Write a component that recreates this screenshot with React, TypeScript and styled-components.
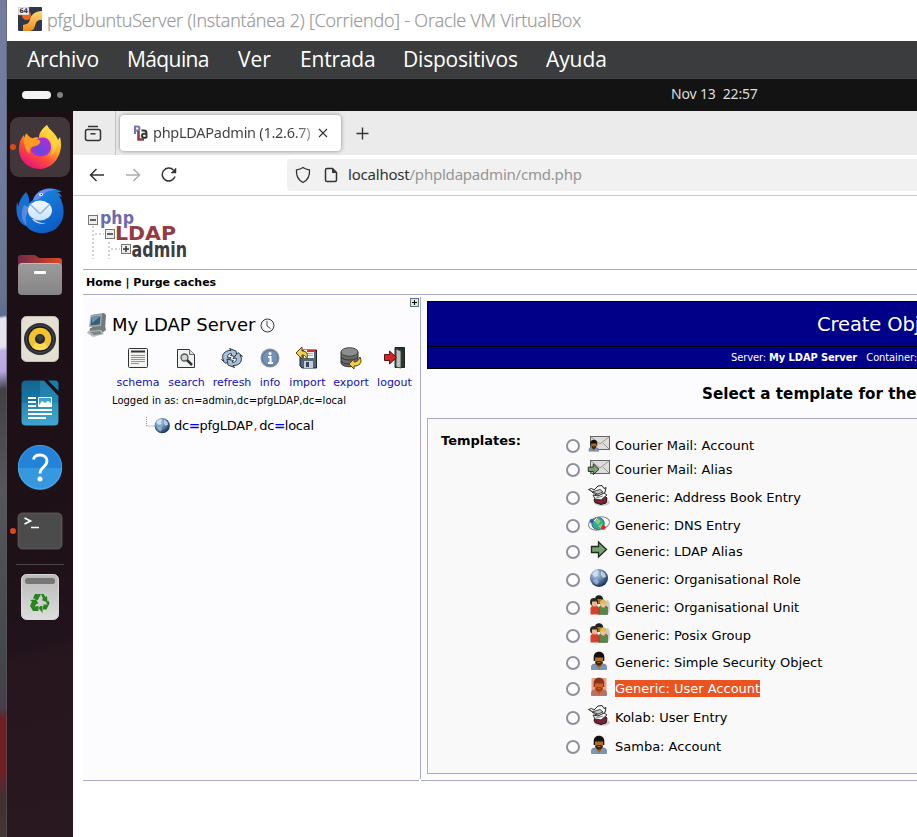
import React from "react";
import styled, { createGlobalStyle } from "styled-components";

const Global = createGlobalStyle`
  * { box-sizing: border-box; }
  html, body { margin: 0; padding: 0; overflow: hidden; background: #fff; }
  svg { display: block; flex: none; }
`;

const sans = `"DejaVu Sans", Verdana, sans-serif`;
const ui = `"Noto Sans", "Open Sans", sans-serif`;

/* ---------- frame ---------- */
const Screen = styled.div`
  display: flex;
  width: 917px;
  height: 837px;
  overflow: hidden;
`;
const Wallpaper = styled.div`
  flex: none;
  width: 7px;
  border-right: 1px solid rgba(90, 90, 100, 0.55);
  background: linear-gradient(172deg, transparent 0 702px, #6d1f24 712px 765px, transparent 790px),
    linear-gradient(170deg, #737c9f 0, #707da0 150px, #67738f 290px, #5d6c93 311px, #e6e6ee 314px, #e4e2ee 342px,
      #c0aee8 346px, #b9a5e4 366px, #3f4143 384px, #55575b 480px, #43464a 660px, #4a3b4a 705px, #40302f 790px, #473a35 837px);
`;
const Machine = styled.div`
  flex: 1;
  min-width: 0;
  display: flex;
  flex-direction: column;
`;
const TitleBar = styled.header`
  height: 41px;
  flex: none;
  display: flex;
  align-items: center;
  gap: 5px;
  padding: 0 0 4px 11px;
  background: #fff;
  color: #999;
  font: 300 18px/24px "Open Sans", sans-serif;
  letter-spacing: -0.2px;
  white-space: nowrap;
`;
const TitleText = styled.span`
  padding-top: 2px;
  -webkit-text-stroke: 0.25px #999;
`;
const MenuBar = styled.nav`
  height: 38px;
  flex: none;
  display: flex;
  align-items: center;
  padding: 0 0 1px 20px;
  background: #3b3c3d;
  border-bottom: 1px solid #424446;
  color: #fff;
  font: 21px/28px "Open Sans", sans-serif;
`;
const MenuItem = styled.span<{ $w: number; $ls: number }>`
  width: ${p => p.$w}px;
  letter-spacing: ${p => p.$ls}px;
`;
const TopBar = styled.div`
  height: 32px;
  flex: none;
  display: flex;
  align-items: center;
  padding-left: 15px;
  background: #131313;
`;
const Pill = styled.i`
  width: 29px;
  height: 8px;
  border-radius: 4px;
  background: #f2f2f2;
`;
const Dot = styled.i`
  width: 6px;
  height: 6px;
  margin-left: 6px;
  border-radius: 50%;
  background: #808080;
`;
const Clock = styled.time`
  margin: -3px 0 0 608px;
  font: 14px/20px ${ui};
  letter-spacing: -0.15px;
  white-space: pre;
  color: #dedede;
`;
const Desktop = styled.div`
  flex: 1;
  min-height: 0;
  display: flex;
`;

/* ---------- dock ---------- */
const Dock = styled.aside`
  width: 66px;
  flex: none;
  display: flex;
  flex-direction: column;
  align-items: center;
  padding-top: 4px;
  background: linear-gradient(165deg, #1b0e15 0, #1e1118 440px, #21131b 520px, #28161f 540px, #291820 100%);
`;
const DockItem = styled.div<{ $running?: boolean }>`
  position: relative;
  width: 66px;
  height: 64px;
  display: grid;
  place-items: center;
  &::before {
    content: "";
    display: ${p => (p.$running ? "block" : "none")};
    position: absolute;
    z-index: 1;
    left: 3px;
    top: 29px;
    width: 6px;
    height: 6px;
    border-radius: 50%;
    background: #dd4814;
  }
`;
const ActiveTile = styled.div`
  width: 60px;
  height: 60px;
  display: grid;
  place-items: center;
  padding-bottom: 1px;
  border-radius: 9px;
  background: #413639;
`;
const DockRule = styled.hr`
  width: 48px;
  height: 1px;
  margin: 1px 0 0;
  border: 0;
  flex: none;
  background: #4c4548;
`;

/* ---------- browser ---------- */
const Browser = styled.main`
  flex: 1;
  min-width: 0;
  display: flex;
  flex-direction: column;
  background: #fff;
`;
const TabStrip = styled.div`
  height: 44px;
  flex: none;
  display: flex;
  background: #ebebeb;
`;
const RecentTabs = styled.div`
  width: 43px;
  display: grid;
  place-items: center;
  padding: 1px 3px 0 0;
  border-right: 1px solid #c3c3c3;
`;
const Tab = styled.div`
  width: 221px;
  height: 36px;
  margin: 4px 0 0 4px;
  padding: 0 13px;
  display: flex;
  align-items: center;
  border-radius: 4px;
  background: #fff;
  box-shadow: 0 0 4px rgba(0, 0, 0, 0.42);
`;
const TabTitle = styled.span`
  width: 161px;
  margin: -2px 5px 0 4px;
  white-space: nowrap;
  font: 14.5px/22px ${ui};
  letter-spacing: -0.27px;
  background: linear-gradient(90deg, #404040 88%, #999 98%);
  background-clip: text;
  color: transparent;
`;
const NewTab = styled.div`
  padding: 16px 0 0 15px;
`;
const NavBar = styled.div`
  height: 41px;
  flex: none;
  display: flex;
  align-items: center;
  padding-left: 16px;
  border-bottom: 1px solid #c9c9c9;
`;
const NavButtons = styled.div`
  display: flex;
  gap: 20px;
  width: 198px;
`;
const UrlField = styled.div`
  flex: 1;
  height: 32px;
  display: flex;
  align-items: center;
  gap: 12px;
  padding-left: 7px;
  border-radius: 4px 0 0 4px;
  background: #f1f1f1;
`;
const Url = styled.span`
  margin: -2px 0 0 -2px;
  font: 15px/22px ${ui};
  letter-spacing: -0.21px;
  color: #969696;
  b { font-weight: 400; color: #333; }
`;

/* ---------- page ---------- */
const Page = styled.div`
  flex: 1;
  padding-left: 10px;
  font-family: ${sans};
  color: #000;
`;
const LogoArea = styled.div`
  height: 73px;
  padding: 12px 0 0 4px;
`;
const PageMenu = styled.div`
  height: 26px;
  padding: 1px 3px 0;
  border: solid #aaaacd;
  border-width: 1px 0;
  font: bold 11px/23px ${sans};
`;
const Columns = styled.div`
  display: flex;
  height: 486px;
  gap: 2px;
`;
const TreeColumn = styled.section`
  width: 336px;
  flex: none;
  display: flex;
  flex-direction: column;
  padding-top: 1px;
  border-bottom: 1px solid #aaaacd;
  background: linear-gradient(#fcfcfe, #fcfcfe) no-repeat 0 2px / 100% 482px;
`;
const Expand = styled.div`
  width: 9px;
  height: 9px;
  margin: 2px 0 0 auto;
`;
const ServerTitle = styled.h1`
  display: flex;
  align-items: center;
  height: 24px;
  margin: 6px 0 0;
  padding-left: 4px;
  font: 18px/24px ${sans};
  white-space: nowrap;
`;
const ServerName = styled.span`
  width: 148px;
  margin-left: 4px;
`;
const Tools = styled.div`
  display: flex;
  margin-top: 9px;
  padding-left: 30px;
`;
const Tool = styled.div<{ $w: number }>`
  width: ${p => p.$w}px;
  display: flex;
  flex-direction: column;
  align-items: center;
  font: 11px/14px ${sans};
  color: #1111b4;
  svg { margin: 0 1px 6px 0; }
`;
const LoggedIn = styled.p`
  margin: 4px 0 0 29px;
  font: 10px/13px ${sans};
`;
const TreeRoot = styled.div`
  display: flex;
  height: 18px;
  margin: 10px 0 0 61px;
  font: 13px/18px ${sans};
  letter-spacing: -0.27px;
  white-space: nowrap;
  svg { margin-right: 4px; }
  b { font-weight: 400; color: #00f; -webkit-text-stroke: 0.4px #00f; }
  em { font-style: normal; color: #f00; margin: 0 2px 0 1px; }
`;
const Divider = styled.div`
  width: 1px;
  height: 482px;
  margin: 2px 1px 0 -1px;
  flex: none;
  background: #aaaacd;
`;
const MainColumn = styled.section`
  flex: 1;
  min-width: 0;
  display: flex;
  flex-direction: column;
  margin-left: -3px;
  padding: 6px 0 0 6px;
  border-bottom: 1px solid #aaaacd;
  background: linear-gradient(#fcfcfe, #fcfcfe) no-repeat 0 2px / 100% 482px;
`;
const Banner = styled.div`
  height: 46px;
  padding-left: 389px;
  border: solid #000;
  border-width: 1px 0 1px 1px;
  background: #000088;
  color: #fff;
  font: 19.5px/46px ${sans};
  letter-spacing: -0.1px;
  white-space: nowrap;
  overflow: hidden;
`;
const SubBanner = styled.div`
  height: 22px;
  padding-left: 303px;
  border: solid #000;
  border-width: 0 0 1px 1px;
  background: #000088;
  color: #fff;
  font: 11px/21px "DejaVu Sans Condensed", ${sans};
  letter-spacing: -0.08px;
  white-space: pre;
  overflow: hidden;
  b { letter-spacing: -0.1px; }
`;
const Heading = styled.h2`
  height: 20px;
  margin: 15px 0 14px;
  padding-left: 275px;
  overflow: hidden;
  white-space: nowrap;
  font: bold 15.2px/20px ${sans};
`;
const Form = styled.div`
  height: 356px;
  display: flex;
  padding-left: 13px;
  border: solid #aaaacd;
  border-width: 1px 0 1px 1px;
  background: #f9f9f9;
`;
const FormLabel = styled.div`
  width: 125px;
  padding-top: 13px;
  font: bold 13px/18px ${sans};
`;
const Options = styled.div`
  padding-top: 16px;
`;
const Option = styled.label<{ $gap: number }>`
  display: flex;
  align-items: center;
  height: 20px;
  margin-top: ${p => p.$gap}px;
  font: 13px/20px ${sans};
  white-space: nowrap;
`;
const Radio = styled.i`
  width: 14px;
  height: 14px;
  margin-top: 2px;
  border: 2px solid #8f8f9d;
  border-radius: 50%;
  background: #fff;
`;
const IconSlot = styled.span`
  width: 24px;
  height: 24px;
  margin: -3px 4px 0 7px;
  display: grid;
  place-items: center;
`;
const OptionText = styled.span<{ $selected?: boolean }>`
  line-height: 17px;
  background: ${p => (p.$selected ? "#e95420" : "transparent")};
  color: ${p => (p.$selected ? "#fff" : "#000")};
`;

/* ---------- window icons ---------- */
const BoxLogo = () => (
  <svg width="24" height="24" viewBox="0 0 24 24">
    <defs><linearGradient id="vb" x2="0" y2="1"><stop stopColor="#ffd873" /><stop offset="1" stopColor="#f28a1c" /></linearGradient></defs>
    <rect width="24" height="24" rx="1" fill="#303746" />
    <path d="M24 4v9c-5-.5-6 2-7 6s-3 5-7 5H5v-6c5-1 6-2 7-6s5-8 12-8z" fill="url(#vb)" />
    <circle cx="8.5" cy="8.500" r="4.500" fill="#f0651b" />
    <rect width="11" height="8" fill="#f5f5f5" stroke="#888" strokeWidth=".5" />
    <text x="1.200" y="6.400" fontSize="6.500" fontWeight="700" fontFamily="DejaVu Sans" fill="#333">64</text>
  </svg>
);
const Firefox = () => (
  <svg width="44" height="46" viewBox="0 0 44 46">
    <defs>
      <linearGradient id="ff" x1=".85" y1=".1" x2=".3" y2="1"><stop stopColor="#fff04d" /><stop offset=".35" stopColor="#ffb22e" /><stop offset=".65" stopColor="#ff4f36" /><stop offset="1" stopColor="#e8127f" /></linearGradient>
      <radialGradient id="fp" cx=".5" cy=".65"><stop stopColor="#5d4bd8" /><stop offset="1" stopColor="#a52fdb" /></radialGradient>
    </defs>
    <path d="M29 1c2 5 9 8 11 15l2-3c4 14-4 31-20 32C8 45 0 34 1 23c.400-5 2-9 5-12l1 5 2-6 4 5c4-2 7-2 8-1 0-6 4-10 8-13z" fill="url(#ff)" />
    <path d="M22 14c7-2 11 3 11 9 0 12-18 12-20 3-1-6 3-11 9-12z" fill="url(#fp)" />
    <path d="M6 15l2-6c3 5 6 5 10 6 4 1 5 2 4 4-2 3-5 3-8 4-2 2-3 3-2 7-4-3-7-9-6-15z" fill="#ff9a25" />
    <path d="M29 1c-4 5-3 9 1 13 6 5 6 13 2 18 8-4 9-18 3-23-3-3-5-5-6-8z" fill="#ffd53b" opacity=".8" />
  </svg>
);
const Thunderbird = () => (
  <svg width="48" height="48" viewBox="0 0 48 48">
    <defs>
      <linearGradient id="tb" x2=".5" y2="1"><stop stopColor="#1f8be6" /><stop offset="1" stopColor="#0b5fc4" /></linearGradient>
      <linearGradient id="te" x2="0" y2="1"><stop stopColor="#f4faff" /><stop offset="1" stopColor="#c8e2fb" /></linearGradient>
    </defs>
    <path d="M10 5c3 4 4 8 3 14l-3 20C2 36-1 26 1 15c1 2 1 3 1 5 1-6 4-11 8-15z" fill="#1670cf" />
    <path d="M17 13C20 3 33-3 46 5h-5c3 1 4 3 5 5l-3-1c8 13 5 28-5 34-9 5-21 4-27-3-7-9-3-21 6-27z" fill="url(#tb)" />
    <path d="M17 13c3-9 13-13 24-10-8 0-12 2-15 6-3 4-6 5-9 4z" fill="#8a8cf0" opacity=".75" />
    <path d="M8 18c-4 9-2 17 3 21-2-6-2-12 3-18z" fill="#8d95ee" opacity=".6" />
    <ellipse cx="24" cy="23.500" rx="12" ry="10" fill="url(#te)" />
    <path d="M14 17l9 9q1 .8 2 0l9-9" fill="none" stroke="#8fb4da" strokeWidth="1.500" />
    <path d="M18 32c2 2 6 4 12 5-7 0-11-1-14-5z" fill="#d8d4fb" />
    <ellipse cx="25" cy="7.500" rx="2" ry="1.600" fill="#fff" /><circle cx="25.300" cy="7.500" r=".8" fill="#235" />
  </svg>
);
const Files = () => (
  <svg width="46" height="42" viewBox="0 0 46 42">
    <defs>
      <linearGradient id="fo"><stop stopColor="#702847" /><stop offset="1" stopColor="#df4a20" /></linearGradient>
      <linearGradient id="fg" x2="0" y2="1"><stop stopColor="#9b9b9b" /><stop offset="1" stopColor="#858585" /></linearGradient>
    </defs>
    <path d="M1 4q0-3 3-3h13q2 0 3 1.500L22 4h20q3 0 3 3v18H1z" fill="url(#fo)" />
    <rect x="1" y="9" width="44" height="32" rx="4" fill="url(#fg)" />
    <path d="M3 10.500Q4 9.500 6 9.500h34q2 0 3 1" stroke="#bdbdbd" fill="none" />
    <rect x="17" y="17" width="12" height="3" rx="1" fill="#fff" />
  </svg>
);
const Rhythmbox = () => (
  <svg width="38" height="46" viewBox="0 0 38 46">
    <rect x=".500" y=".500" width="37" height="45" rx="5" fill="#e4e0d4" stroke="#c4bfb2" />
    <circle cx="19" cy="23" r="16" fill="#2d3034" /><circle cx="19" cy="23" r="13.500" fill="#15181c" stroke="#4a4d51" />
    <circle cx="19" cy="23" r="11.300" fill="#f3c12c" /><path d="M11 31a11.300 11.300 0 0 0 16 0l-8-8z" fill="#ffd857" />
    <circle cx="19" cy="23" r="5" fill="#25282d" /><circle cx="19" cy="22" r="3" fill="#3b3d40" />
  </svg>
);
const Writer = () => (
  <svg width="38" height="46" viewBox="0 0 38 46">
    <defs><linearGradient id="wr" x2="0" y2="1"><stop stopColor="#12658f" /><stop offset=".5" stopColor="#1979a8" /><stop offset=".51" stopColor="#2587b4" /><stop offset="1" stopColor="#3fa4cd" /></linearGradient></defs>
    <path d="M5 .500h18L37.500 16v25q0 4.500-4.500 4.500H5Q.500 45.500.500 41V5Q.500.500 5 .500z" fill="url(#wr)" />
    <path d="M19 1h4l14 15v29H19z" fill="#48b3dc" opacity=".28" />
    <path d="M27 .500h7q3.500 0 3.500 3.500v7z" fill="#197ba8" />
    <g fill="#fff"><path d="M7 17h8v2H7zM7 21h8v2H7zM7 25h8v2H7zM7 29h24v2H7zM7 33h24v2H7zM7 37h18v2H7z" /><rect x="17" y="17" width="14" height="10" rx="1" /></g>
    <path d="M18 18h12v5l-3-2-3 2-3-2-3 4z" fill="#3da4d0" />
  </svg>
);
const Help = () => (
  <svg width="46" height="46" viewBox="0 0 46 46">
    <circle cx="23" cy="23" r="22" fill="#2283d9" /><path d="M1 24a22 22 0 0 0 44 0z" fill="#3698df" />
    <circle cx="23" cy="23" r="21.700" fill="none" stroke="#68b0e5" strokeWidth=".6" />
    <path d="M16.500 15.500C17 12.500 19.500 11 23 11c4 0 7 2 7 6 0 6-7 6-7 12.500" fill="none" stroke="#fff" strokeWidth="2.800" /><circle cx="23" cy="35" r="2.500" fill="#fff" />
  </svg>
);
const Terminal = () => (
  <svg width="46" height="38" viewBox="0 0 46 38">
    <rect x="1" y="1" width="44" height="36" rx="4.500" fill="#4b4b4b" stroke="#676767" strokeWidth=".7" />
    <path d="M7.500 6l6 3-6 3" fill="none" stroke="#fff" strokeWidth="1.700" /><path d="M14 15.500h8" stroke="#fff" strokeWidth="1.500" />
  </svg>
);
const Trash = () => (
  <svg width="38" height="46" viewBox="0 0 38 46">
    <defs><linearGradient id="tr" x2="0" y2="1"><stop stopColor="#bababa" /><stop offset="1" stopColor="#dddddd" /></linearGradient></defs>
    <rect x=".500" y=".500" width="37" height="45" rx="5" fill="url(#tr)" stroke="#d8d8d8" />
    <rect x="4" y="4" width="30" height="6" rx="2.500" fill="#777" />
    <g fill="#28851c">
      <path d="M14 20h6l-3.500 6.500-4.500-2.500z" /><path d="M20 20h2.500l2 3 1.500-1 .5 6.500-6-2.500 1.500-1z" />
      <path d="M25.500 29l2.500-2 1 3-3 6h-3.500v-5H27z" transform="translate(-.5 -.5)" /><path d="M21.500 29.500v9.500l-4-5z" />
      <path d="M9 26l6-.5 3 5-2-1-2.500 3 4-.5V37H12l-3-5 2-4.500z" />
    </g>
    <path d="M19 26l4 6h-7z" fill="#cfcfcf" />
  </svg>
);

/* ---------- browser icons ---------- */
const Line = styled.svg`
  fill: none;
  stroke: #333;
  stroke-width: 1.5;
`;
const Recent = () => <Line width="18" height="18" viewBox="0 0 18 18"><path d="M4 1.500h10" /><rect x="1.500" y="4.500" width="15" height="11" rx="2" /><path d="M6.500 8.800h5" /></Line>;
const Favicon = () => (
  <svg width="16" height="16" viewBox="0 0 16 16">
    <path d="M2 9V1.500h2.500q2 0 2 2t-2 2H2" stroke="#7779ad" strokeWidth="2" fill="none" />
    <path d="M5.500 6v8.500H11" stroke="#923b42" strokeWidth="2.600" fill="none" />
    <path d="M8.500 5.500h2.500q2.500 0 2.500 2.500v5M13.500 8.800h-2.500q-2 0-2 2t2 2h2.500" stroke="#333" strokeWidth="1.900" fill="none" />
  </svg>
);
const Cross = () => <Line width="10" height="10" viewBox="0 0 10 10"><path d="M1 1l8 8M9 1L1 9" strokeWidth="1.100" /></Line>;
const Plus = () => <Line width="13" height="13" viewBox="0 0 13 13"><path d="M6.500.500v12M.500 6.500h12" strokeWidth="1.400" /></Line>;
const Back = () => <Line width="16" height="16" viewBox="0 0 16 16"><path d="M15 8H2M7.500 2L1.500 8l6 6" /></Line>;
const Forward = () => <Line width="16" height="16" viewBox="0 0 16 16"><path d="M1 8h13M8.500 2l6 6-6 6" stroke="#adadad" /></Line>;
const Reload = () => <Line width="16" height="16" viewBox="0 0 16 16"><path d="M12.500 3A6.500 6.500 0 1 0 14 9.500" /><path d="M10 6h5V1z" fill="#333" strokeWidth=".5" /></Line>;
const Shield = () => <Line width="18" height="18" viewBox="0 0 18 18"><path d="M9 1.500c2 1.500 4 2 6.500 2.300.5 6.200-1.500 10.200-6.500 12.700-5-2.500-7-6.500-6.500-12.700C5 3.500 7 3 9 1.500z" strokeWidth="1.300" /></Line>;
const Doc = () => <Line width="14" height="16" viewBox="0 0 14 16"><path d="M3 1.500h5.500L12.500 5.500v7.500q0 1.500-1.500 1.500H3q-1.500 0-1.500-1.500V3Q1.500 1.500 3 1.500z" /><path d="M8.500 2v3.500H12z" fill="#333" strokeWidth="1" /></Line>;

/* ---------- page icons ---------- */
const PlaLogo = () => (
  <svg width="102" height="52" viewBox="0 0 102 52">
    <g stroke="#c6c6c6" strokeWidth="1.600" strokeDasharray="2 2"><path d="M6 18v33M22 34v17M8 26h9M24 41h9" fill="none" /></g>
    <g fill="#ededed" stroke="#777"><rect x="1.500" y="7.500" width="9" height="9" /><rect x="18.500" y="21.500" width="9" height="9" /><rect x="34.500" y="36.500" width="9" height="9" /></g>
    <path d="M3 12h6M20 26h6M36 41h6M39 38v6" stroke="#333" strokeWidth="1.500" />
    <text x="13" y="16" fontSize="17" fontFamily="DejaVu Sans Condensed, DejaVu Sans" fontWeight="700" textLength="34" lengthAdjust="spacingAndGlyphs" fill="#6b6cae">php</text>
    <text x="28" y="32" fontSize="20" fontFamily="DejaVu Sans" fontWeight="700" textLength="61" lengthAdjust="spacingAndGlyphs" fill="#943c43">LDAP</text>
    <text x="44.500" y="49" fontSize="20.500" fontFamily="DejaVu Sans Condensed, DejaVu Sans" fontWeight="700" textLength="55.500" lengthAdjust="spacingAndGlyphs" fill="#3d3d40">admin</text>
  </svg>
);
const ExpandIcon = () => <svg width="9" height="9" viewBox="0 0 9 9"><rect x=".500" y=".500" width="8" height="8" fill="#dde6e8" stroke="#5d7377" /><path d="M2 4.500h5M4.500 2v5" stroke="#000" /></svg>;
const Computer = () => (
  <svg width="21" height="24" viewBox="0 0 21 24">
    <path d="M4 2l13-2 2 2-1 14H5z" fill="#73797a" /><path d="M3.500 2.500L15 1l-1 12-12 1z" fill="#a4adac" /><path d="M4.500 4l9-1-.7 8.500-9.300 1z" fill="#395d7d" /><path d="M4.500 4l9-1-8.500 7z" fill="#6c92b1" />
    <path d="M3 15l15-2 1 4-4 3H2z" fill="#757d7d" /><path d="M1 18l13-1 3 4-11 3-6-4z" fill="#b6bbbb" /><path d="M3 19l10-1 2 3-8 1z" fill="#7e8787" />
  </svg>
);
const ClockIcon = () => <svg width="15" height="15" viewBox="0 0 15 15"><circle cx="7.500" cy="7.500" r="6.500" fill="#fdfdfd" stroke="#333" /><path d="M7 3v5l3.500 2.500" fill="none" stroke="#444" /><circle cx="7.500" cy="7.500" r="5" fill="none" stroke="#ddd" strokeWidth=".6" /></svg>;
const Ico = ({ children }: { children: React.ReactNode }) => <svg width="24" height="24" viewBox="0 0 24 24">{children}</svg>;
const SchemaIcon = () => <Ico><rect x="2.500" y="2.500" width="19" height="19" rx="1" fill="#f3f3f1" stroke="#333" /><path d="M5 5.500h14" stroke="#333" strokeWidth="2" /><path d="M5 9.500h14M5 11.500h14M5 13.500h14M5 15.500h14M5 17.500h8" stroke="#8a93a6" /></Ico>;
const SearchIcon = () => <Ico><path d="M3.500 3.500h12l5 5v13h-17z" fill="#f2f2f0" stroke="#333" /><path d="M15.500 3.500v5h5" fill="#ddd" stroke="#666" /><circle cx="10.500" cy="11.500" r="3.500" fill="#cbd5d8" stroke="#555" strokeWidth="1.300" /><path d="M13 14l5 5" stroke="#333" strokeWidth="2.500" /></Ico>;
const RefreshIcon = () => (
  <Ico><g fill="#a9bdd5" stroke="#28384c" strokeLinejoin="round"><path d="M4 15C0 9 5 4 11 4.500L9.500 2.500 16 5l1 6-6.500-1.500 1.500-1.500c-3-1-5 1-4 4l3-.5-5 6-4.500-4z" /><path d="M20 9c4 6-1 11-7 10.500l1.500 2L8 19l-1-6 6.500 1.500L12 16c3 1 5-1 4-4l-3 .5 5-6 4.500 4z" /></g></Ico>
);
const InfoIcon = () => <Ico><circle cx="12" cy="12" r="8.700" fill="#7092bd" stroke="#8a9196" strokeWidth="1.600" /><circle cx="12" cy="12" r="7.700" fill="none" stroke="#4e719b" strokeWidth=".8" /><circle cx="12" cy="7.500" r="1.500" fill="#fff" /><path d="M10 11h2.500v6M10 17h5" stroke="#fff" strokeWidth="2" fill="none" /></Ico>;
const ImportIcon = () => (
  <Ico><path d="M5 4h16.500v18H7l-2-2z" fill="#536779" stroke="#182532" /><path d="M9 4h10v8H9z" fill="#f5f5f5" /><path d="M12 4h8v2h-8z" fill="#ca3333" /><path d="M11 7.500h7M11 9.500h7" stroke="#aaa" /><path d="M9 15h9v7H9z" fill="#c8ced1" /><path d="M11 16h3v5h-3z" fill="#34485a" /><path d="M1 7l6-6v4c5 0 6 3 5 8-2-4-3-4-5-4v4z" fill="#f3ce55" stroke="#5d4208" /></Ico>
);
const ExportIcon = () => (
  <Ico><path d="M2 6v11c1 5 16 5 17 0V6z" fill="#666a6a" stroke="#333" /><path d="M2 11c2 4 15 4 17 0M2 15c2 4 15 4 17 0" fill="none" stroke="#333" /><ellipse cx="10.500" cy="6" rx="8.500" ry="4.300" fill="#8b8e8b" stroke="#444" /><path d="M21 11c3 6-1 9-6 9v3l-5-5 5-5v3c3 0 5-2 6-5z" fill="#f3ce55" stroke="#5d4208" /></Ico>
);
const LogoutIcon = () => (
  <Ico><path d="M13 1.500h9.500v20H13z" fill="#22362e" stroke="#222" /><path d="M14 3l5 2v17l-5-1z" fill="#bac0ba" stroke="#444" /><path d="M2.500 8.500h5V5l7 6.500-7 6.500v-3.500h-5z" fill="#cf2525" stroke="#571111" /></Ico>
);
const GlobeArt = () => (
  <>
    <defs><radialGradient id="gl" cx=".35" cy=".3" r=".75"><stop stopColor="#bed3e8" /><stop offset=".5" stopColor="#6286b2" /><stop offset="1" stopColor="#12284c" /></radialGradient></defs>
    <circle cx="12" cy="12" r="9" fill="url(#gl)" />
    <path d="M5 8c1-2 3-4 6-4l1 2-2 2 1 2-4 1zM14 5c3 1 5 3 5 6l-3 1-2-3z" fill="#e4ebef" opacity=".7" /><path d="M6 14l4-1 2 3-2 3c-2-1-4-3-4-5z" fill="#b9cbd9" opacity=".6" />
  </>
);
const TreeIcon = () => (
  <svg width="26" height="18" viewBox="0 0 26 18">
    <path d="M2.500 0v9h8" fill="none" stroke="#909090" strokeDasharray="1 1" /><g transform="translate(8 -1.500) scale(.85)"><GlobeArt /></g>
  </svg>
);
const Envelope = () => <><rect x="3.500" y="4.500" width="19" height="13" fill="#dcdcda" stroke="#666" /><path d="M4 5l9 7L22 5M4 17l6-6M22 17l-6-6" fill="none" stroke="#999" /></>;
const PersonArt = () => (
  <>
    <path d="M4.500 20.500v-3c0-2 2-2.500 4-2.500h7c2 0 4 .5 4 2.500v3z" fill="#7897bd" stroke="#53708f" strokeWidth=".6" /><path d="M9.500 15h5v2L12 20l-2.500-3z" fill="#a86822" />
    <path d="M6.700 8c0-7 10.600-7 10.600 0v4H6.700z" fill="#16100c" /><path d="M8 8.500h8V13c0 5-8 5-8 0z" fill="#b26f24" /><path d="M8.200 13c1-1.500 6.600-1.500 7.600 0-1 5-6.600 5-7.600 0z" fill="#39220e" /><path d="M10.500 13.500h3" stroke="#b26f24" />
  </>
);
const MailUser = () => <Ico><Envelope /><g transform="translate(-1 6) scale(.65)"><PersonArt /></g></Ico>;
const ArrowArt = () => <path d="M4.500 8.500h7V4l8 7.500-8 7.500v-4.500h-7z" fill="#79a072" stroke="#1c2c18" strokeWidth="1.300" />;
const MailAlias = () => <Ico><Envelope /><g transform="translate(-2 5) scale(.72)"><ArrowArt /></g></Ico>;
const AddressBook = () => (
  <Ico>
    <ellipse cx="15" cy="18.500" rx="8" ry="3.500" fill="#cfcfcf" />
    <path d="M7 16l2-3 9-1 2 2-1 5-5 1.500-6-2z" fill="#7d2035" stroke="#251016" /><path d="M8 14l9-3 2 1-9 4z" fill="#414346" />
    <path d="M1.500 5.500l3-1L7 6l4-4 4-.500 2 3 2-1-1 5-5 3-5-1-3-3z" fill="#f7f7f5" stroke="#222" /><path d="M5 8l8-2.500L16 8l-5 2z" fill="#c9c9c7" stroke="#222" strokeWidth=".8" /><path d="M6 11l5 1 6-3 3 2-6 5-6-1z" fill="#f3f3f3" stroke="#333" /><path d="M9 14l7-2" stroke="#888" />
  </Ico>
);
const Dns = () => (
  <Ico><circle cx="11" cy="11.500" r="6.200" fill="#35a592" stroke="#286575" /><path d="M7 9l3-3 4 3-3 4zM11 14l5-3-2 6z" fill="#7fd07a" /><path d="M7 9l3-3" stroke="#dff" /><ellipse cx="12" cy="11.500" rx="10.700" ry="6.500" fill="none" stroke="#888" transform="rotate(-12 12 11.500)" /><circle cx="4.500" cy="9" r="2" fill="#2859ba" /><circle cx="16.500" cy="15.500" r="2.200" fill="#cf2e2e" /></Ico>
);
const Alias = () => <Ico><ArrowArt /></Ico>;
const Globe = () => <Ico><GlobeArt /></Ico>;
const Group = () => (
  <Ico>
    <ellipse cx="20.500" cy="13" rx="2.500" ry="7" fill="#ccc" /><circle cx="12" cy="5.500" r="4.300" fill="#24201c" /><path d="M9.500 5h5v4h-5z" fill="#a66a3b" />
    <path d="M3.500 20.500v-6c0-4 8-4 9 0v6z" fill="#da3e2d" /><path d="M12 20.500v-7c1-3 7-3 8.500 0v7z" fill="#568745" stroke="#344f2d" strokeWidth=".5" />
    <circle cx="7" cy="8" r="4" fill="#302a24" /><path d="M5 7.500h5V11c-1 2-4 2-5 0z" fill="#e7b791" /><path d="M13 9c0-5 6.500-5 6.500 0v2.500H13z" fill="#dfbc4f" /><path d="M14 9.500h4.500V12c-1 2-3.500 2-4.500 0z" fill="#edc19b" />
  </Ico>
);
const Person = () => <Ico><PersonArt /></Ico>;
const PersonSelected = () => <Ico><PersonArt /><path d="M4.500 3h15v17.500h-15z" fill="#e95420" opacity=".55" /></Ico>;

const tools: [string, number, React.FC][] = [
  ["schema", 50, SchemaIcon], ["search", 47, SearchIcon], ["refresh", 44, RefreshIcon], ["info", 32, InfoIcon],
  ["import", 43, ImportIcon], ["export", 44, ExportIcon], ["logout", 43, LogoutIcon],
];
const templates: [string, number, React.FC][] = [
  ["Courier Mail: Account", 0, MailUser],
  ["Courier Mail: Alias", 4, MailAlias],
  ["Generic: Address Book Entry", 8, AddressBook],
  ["Generic: DNS Entry", 8, Dns],
  ["Generic: LDAP Alias", 6, Alias],
  ["Generic: Organisational Role", 8, Globe],
  ["Generic: Organisational Unit", 8, Group],
  ["Generic: Posix Group", 8, Group],
  ["Generic: Simple Security Object", 7, Person],
  ["Generic: User Account", 6, PersonSelected],
  ["Kolab: User Entry", 9, AddressBook],
  ["Samba: Account", 9, Person],
];

export default function App() {
  return (
    <Screen>
      <Global />
      <Wallpaper />
      <Machine>
        <TitleBar><BoxLogo /><TitleText>pfgUbuntuServer (Instantánea 2) [Corriendo] - Oracle VM VirtualBox</TitleText></TitleBar>
        <MenuBar>
          <MenuItem $w={100} $ls={-0.2}>Archivo</MenuItem><MenuItem $w={111} $ls={-0.6}>Máquina</MenuItem>
          <MenuItem $w={62} $ls={0}>Ver</MenuItem><MenuItem $w={103} $ls={-0.2}>Entrada</MenuItem>
          <MenuItem $w={143} $ls={-0.2}>Dispositivos</MenuItem><MenuItem $w={80} $ls={-0.1}>Ayuda</MenuItem>
        </MenuBar>
        <TopBar><Pill /><Dot /><Clock>Nov 13  22:57</Clock></TopBar>
        <Desktop>
          <Dock>
            <DockItem $running><ActiveTile><Firefox /></ActiveTile></DockItem>
            <DockItem><Thunderbird /></DockItem>
            <DockItem><Files /></DockItem>
            <DockItem><Rhythmbox /></DockItem>
            <DockItem><Writer /></DockItem>
            <DockItem><Help /></DockItem>
            <DockItem $running><Terminal /></DockItem>
            <DockRule />
            <DockItem><Trash /></DockItem>
          </Dock>
          <Browser>
            <TabStrip>
              <RecentTabs><Recent /></RecentTabs>
              <Tab><Favicon /><TabTitle>phpLDAPadmin (1.2.6.7)</TabTitle><Cross /></Tab>
              <NewTab><Plus /></NewTab>
            </TabStrip>
            <NavBar>
              <NavButtons><Back /><Forward /><Reload /></NavButtons>
              <UrlField><Shield /><Doc /><Url><b>localhost</b>/phpldapadmin/cmd.php</Url></UrlField>
            </NavBar>
            <Page>
              <LogoArea><PlaLogo /></LogoArea>
              <PageMenu>Home | Purge caches</PageMenu>
              <Columns>
                <TreeColumn>
                  <Expand><ExpandIcon /></Expand>
                  <ServerTitle><Computer /><ServerName>My LDAP Server</ServerName><ClockIcon /></ServerTitle>
                  <Tools>{tools.map(([name, w, Icon]) => <Tool key={name} $w={w}><Icon />{name}</Tool>)}</Tools>
                  <LoggedIn>Logged in as: cn=admin,dc=pfgLDAP,dc=local</LoggedIn>
                  <TreeRoot><TreeIcon />dc<b>=</b>pfgLDAP<em>,</em>dc<b>=</b>local</TreeRoot>
                </TreeColumn>
                <Divider />
                <MainColumn>
                  <Banner>Create Obj</Banner>
                  <SubBanner>Server: <b>My LDAP Server</b>   Container:</SubBanner>
                  <Heading>Select a template for the</Heading>
                  <Form>
                    <FormLabel>Templates:</FormLabel>
                    <Options>
                      {templates.map(([name, gap, Icon]) => (
                        <Option key={name} $gap={gap}>
                          <Radio /><IconSlot><Icon /></IconSlot>
                          <OptionText $selected={name === "Generic: User Account"}>{name}</OptionText>
                        </Option>
                      ))}
                    </Options>
                  </Form>
                </MainColumn>
              </Columns>
            </Page>
          </Browser>
        </Desktop>
      </Machine>
    </Screen>
  );
}
